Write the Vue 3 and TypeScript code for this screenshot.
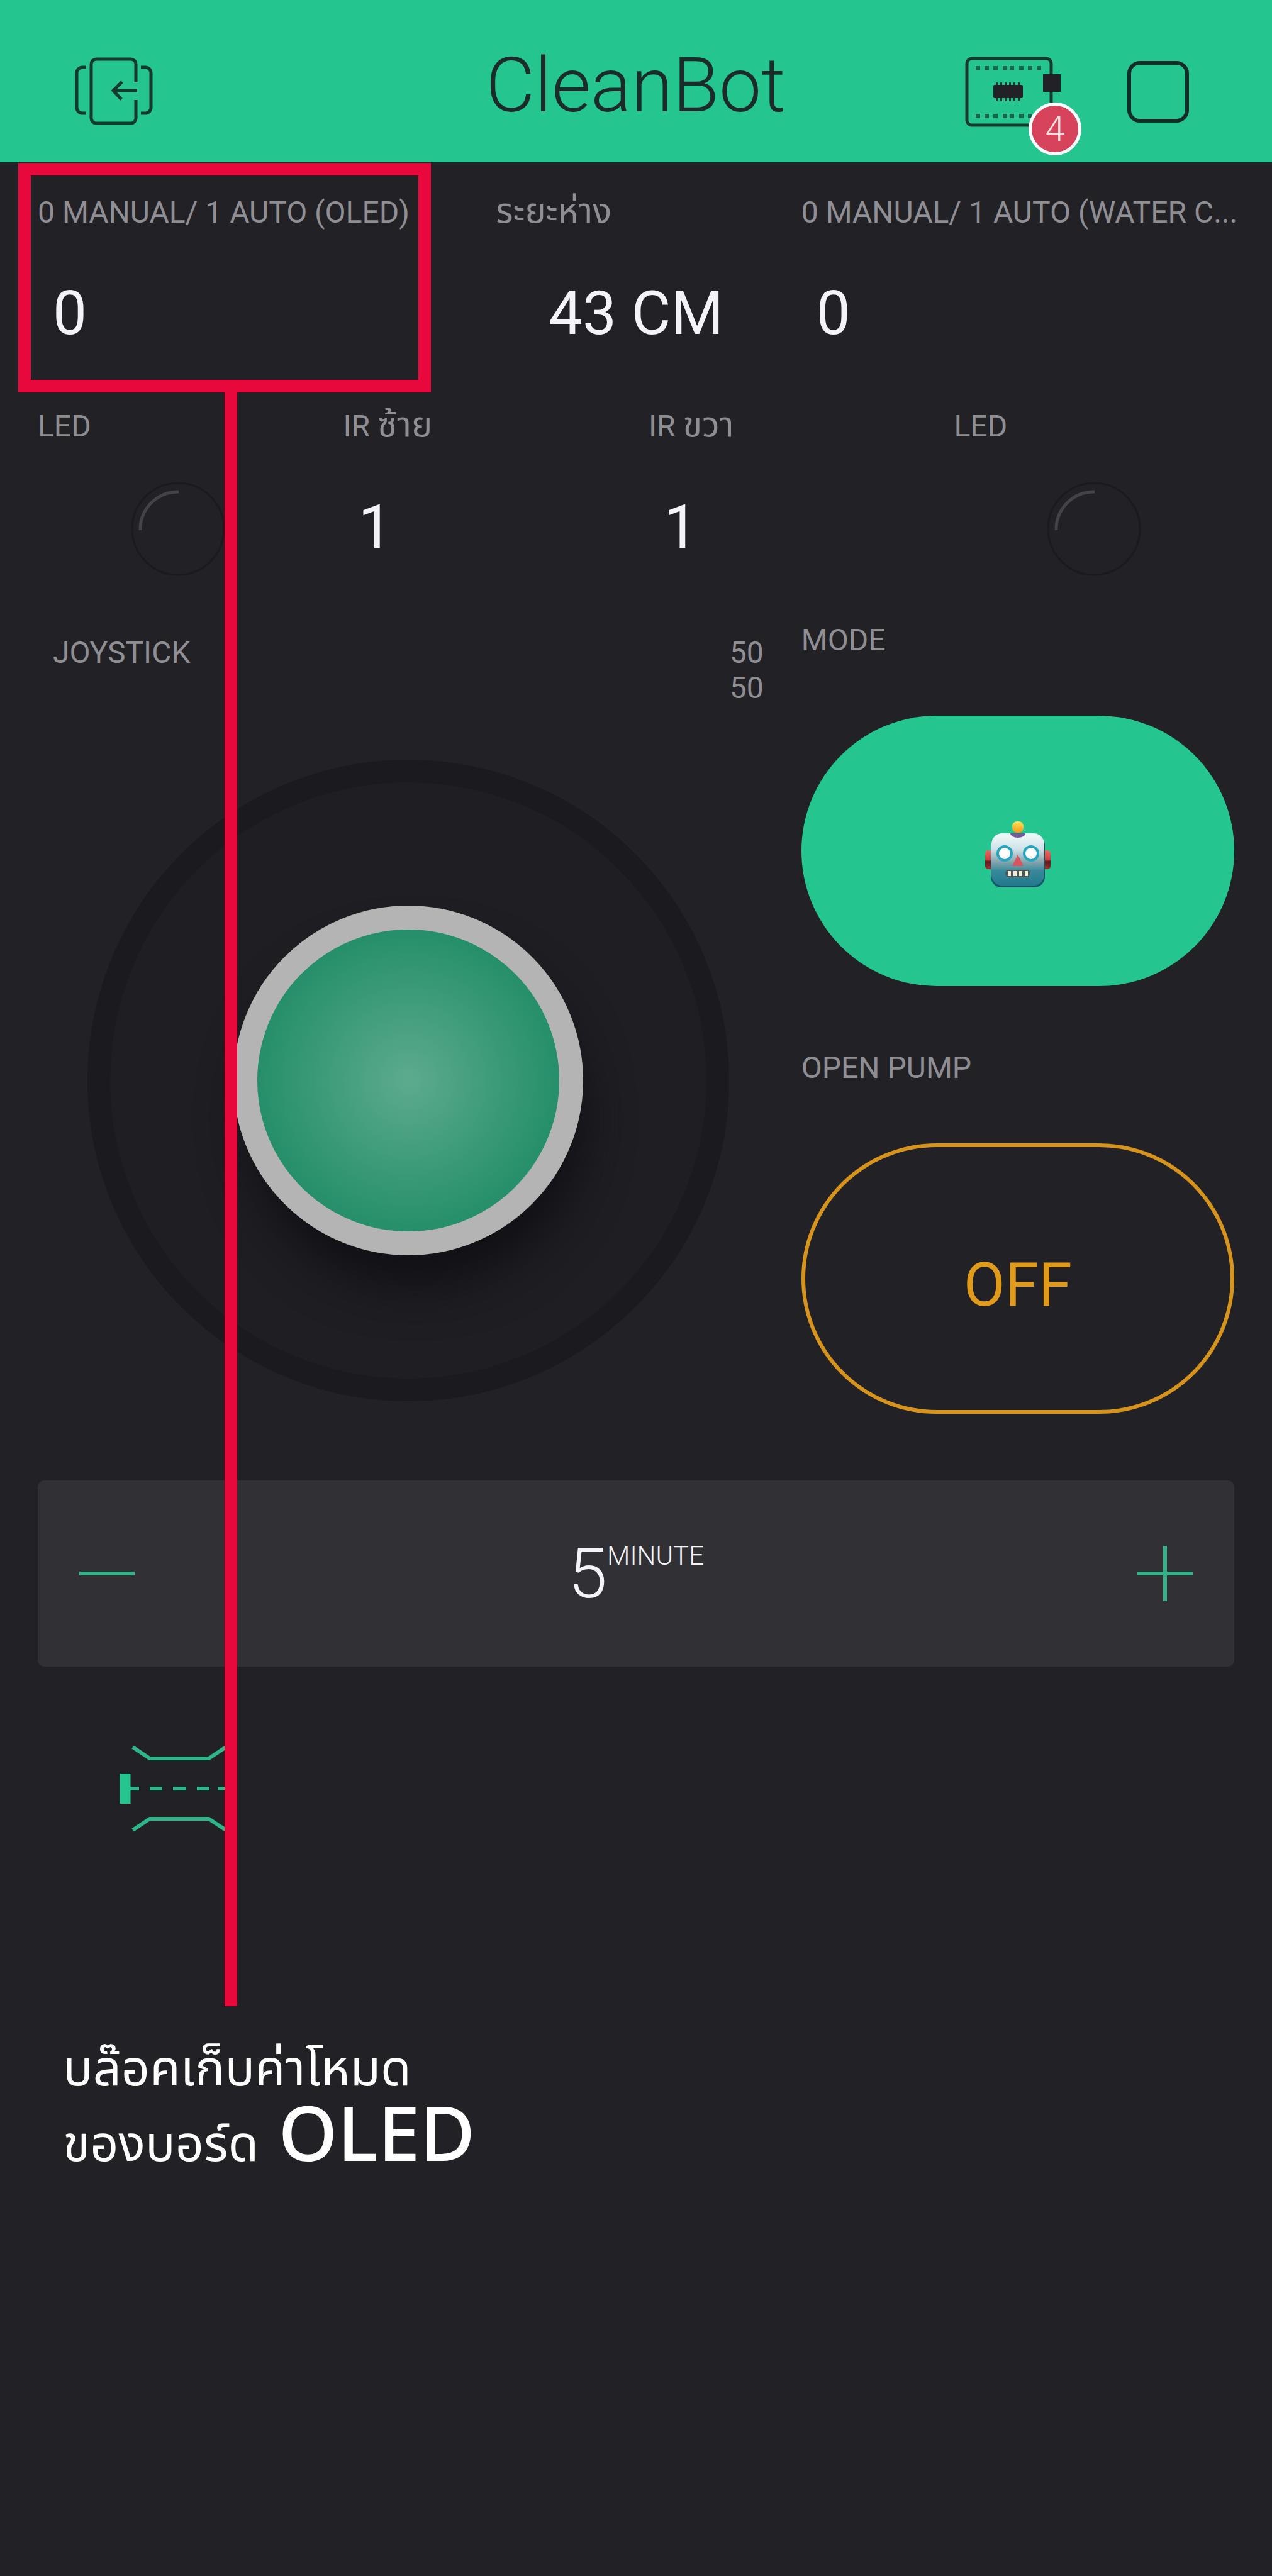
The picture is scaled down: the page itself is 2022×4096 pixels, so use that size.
<script setup lang="ts">
import { ref } from 'vue'

const modeManual = ref(true)
const pumpOn = ref(false)
const minutes = ref(5)
const pinColumns = [20, 34, 48, 63, 74, 89, 103, 117]
const chipPins = [49, 56, 63, 70, 77, 84]

function step(delta: number): void {
  minutes.value = Math.max(0, minutes.value + delta)
}
</script>

<template>
  <div class="app">
    <header class="topbar">
      <button class="icon-button" type="button" aria-label="Exit project">
        <svg width="124" height="110" viewBox="0 0 124 110" fill="none" stroke="#14392f" stroke-width="5">
          <path d="M97 40V11a8 8 0 0 0-8-8H34a8 8 0 0 0-8 8v86a8 8 0 0 0 8 8h55a8 8 0 0 0 8-8V68" />
          <path d="M18 16h-6a9 9 0 0 0-9 9v55a9 9 0 0 0 9 9h6M105 16h7a9 9 0 0 1 9 9v55a9 9 0 0 1-9 9h-7" />
          <path d="M99 53H61M75 39L61 53l13 14" />
        </svg>
      </button>
      <h1 class="title">CleanBot</h1>
      <div class="actions">
        <button class="icon-button device" type="button" aria-label="Devices, 4 notifications">
          <svg width="154" height="112" viewBox="0 0 154 112" fill="none">
            <rect x="3" y="3" width="134" height="106" rx="8" stroke="#153b30" stroke-width="5" />
            <g fill="#15664e">
              <rect v-for="x in pinColumns" :key="'t' + x" :x="x - 3" y="15" width="7" height="7" />
              <rect v-for="x in pinColumns" :key="'b' + x" :x="x - 3" y="91" width="7" height="7" />
            </g>
            <g fill="#1d3b33">
              <rect v-for="x in chipPins" :key="x" :x="x" y="41" width="3" height="30" />
            </g>
            <rect x="45" y="45" width="47" height="21" rx="2" fill="#222127" />
            <rect x="124" y="28" width="28" height="28" fill="#222127" />
          </svg>
          <span class="badge">4</span>
        </button>
        <button class="icon-button" type="button" aria-label="Stop">
          <svg width="98" height="98" viewBox="0 0 98 98" fill="none">
            <rect x="3" y="3" width="92" height="92" rx="17" stroke="#142c27" stroke-width="6" />
          </svg>
        </button>
      </div>
    </header>

    <main class="board">
      <section class="widget span-3 marked">
        <h2 class="label">0 MANUAL/ 1 AUTO (OLED)</h2>
        <p class="value">0</p>
        <div class="frame"></div>
      </section>
      <section class="widget span-2">
        <h2 class="label"><span class="thai">ระยะห่าง</span></h2>
        <p class="value centered">43 CM</p>
      </section>
      <section class="widget span-3">
        <h2 class="label">0 MANUAL/ 1 AUTO (WATER C...</h2>
        <p class="value">0</p>
      </section>

      <section class="widget span-2">
        <h2 class="label">LED</h2>
        <svg class="led" viewBox="0 0 150 150" fill="none">
          <circle cx="75" cy="75" r="73" stroke="#1b1a1f" stroke-width="3" />
          <path d="M15 77A60 60 0 0 1 76 16" stroke="#434247" stroke-width="5" />
        </svg>
      </section>
      <section class="widget span-2">
        <h2 class="label">IR <span class="thai">ซ้าย</span></h2>
        <p class="value">1</p>
      </section>
      <section class="widget span-2">
        <h2 class="label">IR <span class="thai">ขวา</span></h2>
        <p class="value">1</p>
      </section>
      <section class="widget span-2">
        <h2 class="label">LED</h2>
        <svg class="led" viewBox="0 0 150 150" fill="none">
          <circle cx="75" cy="75" r="73" stroke="#1b1a1f" stroke-width="3" />
          <path d="M15 77A60 60 0 0 1 76 16" stroke="#434247" stroke-width="5" />
        </svg>
      </section>

      <section class="widget joystick">
        <div class="joystick-head">
          <h2 class="label">JOYSTICK</h2>
          <div class="coords">
            <span>50</span>
            <span>50</span>
          </div>
        </div>
        <div class="base">
          <button class="knob" type="button" aria-label="Joystick"></button>
        </div>
      </section>

      <section class="widget tall">
        <h2 class="label">MODE</h2>
        <button class="pill on" type="button" aria-label="Mode" @click="modeManual = !modeManual">
          <svg width="106" height="108" viewBox="0 0 106 108">
            <defs>
              <linearGradient id="face" x1="0" y1="0" x2="0" y2="1">
                <stop offset="0" stop-color="#f2fafb" />
                <stop offset="0.3" stop-color="#cfe3e8" />
                <stop offset="0.55" stop-color="#84a5ae" />
                <stop offset="0.72" stop-color="#37899a" />
                <stop offset="1" stop-color="#217a8c" />
              </linearGradient>
              <linearGradient id="ear" x1="0" y1="0" x2="0" y2="1">
                <stop offset="0" stop-color="#ee6a60" />
                <stop offset="0.5" stop-color="#c9403f" />
                <stop offset="0.6" stop-color="#5a1a20" />
                <stop offset="1" stop-color="#a3302f" />
              </linearGradient>
              <linearGradient id="lamp" x1="0" y1="0" x2="0" y2="1">
                <stop offset="0" stop-color="#ffe45c" />
                <stop offset="1" stop-color="#f59a17" />
              </linearGradient>
            </defs>
            <rect x="1" y="47" width="14" height="30" rx="5" fill="url(#ear)" />
            <rect x="91" y="47" width="14" height="30" rx="5" fill="url(#ear)" />
            <rect x="10" y="22" width="86" height="84" rx="17" fill="#165468" />
            <rect x="11" y="20" width="84" height="83" rx="17" fill="url(#face)" />
            <path d="M41 20h24a12 7 0 0 1-24 0z" fill="#77589a" />
            <rect x="44" y="1" width="18" height="18" rx="8" fill="url(#lamp)" />
            <circle cx="32" cy="52" r="11" fill="#fff" stroke="#26a5c0" stroke-width="4" />
            <circle cx="74" cy="52" r="11" fill="#fff" stroke="#26a5c0" stroke-width="4" />
            <path d="M53 54l9 18H44z" fill="#d9545c" />
            <rect x="33" y="78" width="40" height="12" rx="6" fill="#4b565b" />
            <path d="M37 84h5M46 84h5M55 84h5M64 84h5" stroke="#f5ecd6" stroke-width="8" />
          </svg>
        </button>
      </section>

      <section class="widget tall">
        <h2 class="label">OPEN PUMP</h2>
        <button class="pill off" type="button" @click="pumpOn = !pumpOn">{{ pumpOn ? 'ON' : 'OFF' }}</button>
      </section>

      <section class="widget span-8">
        <div class="stepper">
          <button class="step" type="button" aria-label="Decrease" @click="step(-1)">
            <svg width="88" height="88" viewBox="0 0 88 88" stroke="#35b088" stroke-width="6"><path d="M0 44h88" /></svg>
          </button>
          <output class="amount">{{ minutes }}<span class="unit">MINUTE</span></output>
          <button class="step" type="button" aria-label="Increase" @click="step(1)">
            <svg width="88" height="88" viewBox="0 0 88 88" stroke="#35b088" stroke-width="6"><path d="M0 44h88M44 0v88" /></svg>
          </button>
        </div>
      </section>

      <section class="widget span-2 bridge">
        <svg width="186" height="140" viewBox="0 0 186 140" fill="none" stroke="#2fb58a" stroke-width="6">
          <path d="M21 4l27 18h94l27-18M21 136l27-18h94l27 18" />
          <path d="M17 70h14M48 70h20M85 70h21M123 70h20M156 70h13" />
          <path d="M9 46v48M177 46v48" stroke="#24c58e" stroke-width="17" />
        </svg>
      </section>
    </main>

    <p class="caption">บล๊อคเก็บค่าโหมด<br />ของบอร์ด<strong> OLED</strong></p>
  </div>
</template>

<style>
body {
  margin: 0;
  background: #222126;
}
</style>

<style scoped>
.app {
  font-family: Roboto, "Noto Sans", "Noto Sans Thai", sans-serif;
  font-weight: 400;
  color: #f4f4f8;
}
h1,
h2,
p {
  margin: 0;
  font-weight: inherit;
}
button {
  border: 0;
  padding: 0;
  background: none;
  color: inherit;
  font: inherit;
  cursor: pointer;
}
svg {
  display: block;
}
.topbar {
  display: grid;
  grid-template-columns: 1fr auto 1fr;
  align-items: center;
  box-sizing: border-box;
  height: 258px;
  padding: 34px 132px 0 119px;
  background: #24c58e;
}
.title {
  padding: 0 0 20px 12px;
  color: #1b2b29;
  font-size: 120px;
  line-height: 128px;
  font-weight: 300;
}
.icon-button {
  position: relative;
  justify-self: start;
}
.actions {
  display: flex;
  justify-content: flex-end;
  align-items: center;
  gap: 104px;
}
.badge {
  position: absolute;
  left: 101px;
  top: 73px;
  box-sizing: border-box;
  width: 84px;
  height: 84px;
  border: 5px solid #ffffff;
  border-radius: 50%;
  background: #d6435a;
  color: #fbdfe3;
  font-size: 56px;
  line-height: 74px;
  font-weight: 300;
  text-align: center;
}
.board {
  display: grid;
  grid-template-columns: repeat(8, 1fr);
  grid-auto-rows: 340px;
  padding: 40px 40px 0;
}
.widget {
  position: relative;
  box-sizing: border-box;
  min-width: 0;
  padding: 12px 20px 0;
}
.span-2 {
  grid-column: span 2;
}
.span-3 {
  grid-column: span 3;
}
.span-8 {
  grid-column: span 8;
}
.label,
.coords {
  color: #8f8e93;
  font-size: 48px;
  line-height: 56px;
  white-space: nowrap;
}
.thai {
  font-size: 56px;
  line-height: 48px;
}
.value {
  margin-top: 76px;
  padding: 0 24px;
  font-size: 96px;
  line-height: 112px;
  white-space: nowrap;
}
.centered {
  padding: 0;
  text-align: center;
}
.marked {
  z-index: 1;
}
.frame {
  position: absolute;
  inset: -39px 83px 14px -11px;
  border: 20px solid #e8083c;
}
.frame::after {
  content: "";
  position: absolute;
  top: 100%;
  left: 50%;
  width: 20px;
  height: 2586px;
  background: #e8083c;
}
.led {
  width: 150px;
  height: 150px;
  margin: 60px auto 0;
}
.joystick {
  grid-column: 1 / span 5;
  grid-row: 3 / span 4;
  padding: 32px 40px 0 44px;
}
.joystick-head {
  display: flex;
  justify-content: space-between;
}
.coords {
  display: grid;
}
.base {
  display: grid;
  place-items: center;
  box-sizing: border-box;
  width: 1020px;
  height: 1020px;
  margin: 86px auto 0;
  border: 36px solid #1b1a1f;
  border-radius: 50%;
  background: #1f1e23;
}
.knob {
  box-sizing: border-box;
  width: 556px;
  height: 556px;
  border: 38px solid #b4b4b4;
  border-radius: 50%;
  background: radial-gradient(closest-side, #5dab8f, #258f6a);
  box-shadow: 12px 60px 76px -12px #111015;
}
.tall {
  grid-column: 6 / span 3;
  grid-row: span 2;
}
.pill {
  display: grid;
  place-items: center;
  box-sizing: border-box;
  width: 100%;
  height: 430px;
  margin-top: 92px;
  border-radius: 215px;
}
.on {
  padding-top: 12px;
  background: #24c58e;
}
.off {
  padding-top: 20px;
  border: 6px solid #d6941c;
  color: #e09b1a;
  font-size: 96px;
}
.stepper {
  display: flex;
  justify-content: space-between;
  align-items: center;
  box-sizing: border-box;
  height: 296px;
  margin-top: 4px;
  padding: 0 66px;
  border-radius: 10px;
  background: #313035;
}
.amount {
  display: flex;
  align-items: flex-start;
  font-size: 112px;
  line-height: 112px;
  font-weight: 300;
}
.unit {
  font-size: 42px;
  line-height: 56px;
}
.bridge {
  display: grid;
  place-items: center;
  padding: 0 0 8px;
}
.caption {
  padding: 208px 100px 0;
  color: #ffffff;
  font-family: "Noto Sans", "Noto Sans Thai", sans-serif;
  font-size: 79px;
  line-height: 120px;
}
.caption strong {
  font-size: 120px;
  line-height: 80px;
  font-weight: 500;
}
</style>
